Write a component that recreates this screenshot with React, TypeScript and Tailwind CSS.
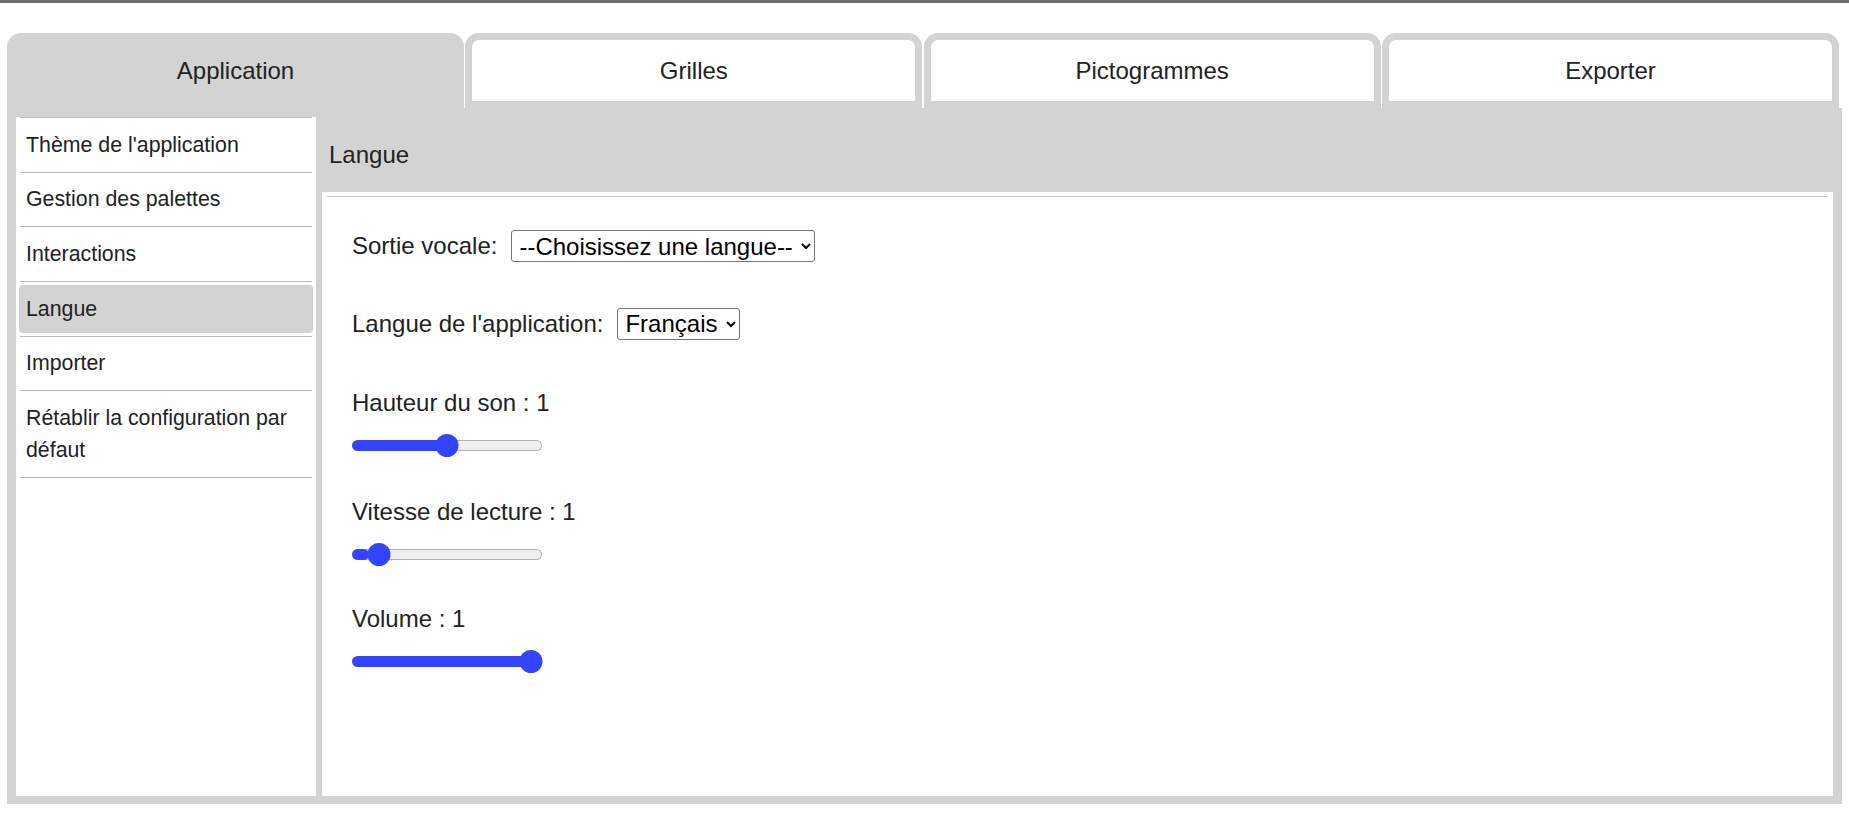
import * as Slider from "@radix-ui/react-slider";

const tabs = ["Application", "Grilles", "Pictogrammes", "Exporter"];

const menuItems = [
    "Thème de l'application",
    "Gestion des palettes",
    "Interactions",
    "Langue",
    "Importer",
    "Rétablir la configuration par défaut",
];

interface RangeProps {
    label: string;
    min: number;
    max: number;
    step: number;
    value: number;
    className: string;
}

function RangeField({ label, min, max, step, value, className }: RangeProps) {
    return (
        <div className={className}>
            <p className="leading-[28px]">{label} : {value}</p>
            <Slider.Root
                className="relative flex items-center w-[190px] h-[23px] mt-[16.5px] select-none touch-none"
                defaultValue={[value]}
                min={min}
                max={max}
                step={step}
            >
                <Slider.Track className="relative grow h-[11px] rounded-full bg-[#efefef] shadow-[inset_0_0_0_1px_#b2b2b2] overflow-hidden">
                    <Slider.Range className="absolute h-full rounded-full bg-[#3344ff]" />
                </Slider.Track>
                <Slider.Thumb className="block w-[23px] h-[23px] rounded-full bg-[#3344ff] outline-none" aria-label={label} />
            </Slider.Root>
        </div>
    );
}

export default function App() {
    const active = "Langue";

    return (
        <div className="min-h-screen bg-white text-[#222] font-['Liberation_Sans',Arial,sans-serif]">
            <div className="h-[3px] bg-[#6b6b6b]" />

            <div className="mx-[7px] mt-[30px]">
                {/* onglets */}
                <div className="flex gap-[1.33px] pr-[3px]">
                    {tabs.map((tab, i) => (
                        <div
                            key={tab}
                            className={`flex-1 h-[75px] flex items-center justify-center border-[7px] border-[#d3d3d3] rounded-t-[14px] text-[24px] ${i === 0 ? "bg-[#d3d3d3]" : "bg-white"}`}
                        >
                            {tab}
                        </div>
                    ))}
                </div>

                {/* panneau */}
                <div className="bg-[#d3d3d3] pt-[9px] px-[9px] pb-[8px]">
                    <div className="flex gap-[6px] h-[679px]">
                        <div className="w-[300px] bg-white text-[21.33px]">
                            <div className="mx-1 border-t border-[#bdbdbd]">
                                {menuItems.map((item) => (
                                    <div key={item} className="border-b border-[#bdbdbd] py-[3px]">
                                        <div
                                            className={`px-[6px] py-[7.83px] leading-[32px] rounded-[4px] ${item === active ? "bg-[#d3d3d3] -mx-px px-[7px]" : ""}`}
                                        >
                                            {item}
                                        </div>
                                    </div>
                                ))}
                            </div>
                        </div>

                        <div className="flex-1 flex flex-col">
                            <div className="h-[75px] flex items-center pl-[7px] text-[24px]">Langue</div>
                            <div className="flex-1 bg-white text-[24px] pl-[30px] flex flex-col">
                                <div className="-ml-[25px] mr-[5px] mt-[4px] border-t border-[#c8c8c8]" />

                                <div className="mt-[33px] h-[32px] flex items-center gap-[14px]">
                                    <span>Sortie vocale:</span>
                                    <select
                                        defaultValue=""
                                        className="h-[32px] border border-[#767676] rounded-[3px] bg-white pl-[3px] pr-[5px] text-black"
                                    >
                                        <option value="">--Choisissez une langue--</option>
                                    </select>
                                </div>

                                <div className="mt-[45.5px] h-[32px] flex items-center gap-[14px]">
                                    <span>Langue de l'application:</span>
                                    <select
                                        defaultValue="fr"
                                        className="h-[32px] border border-[#767676] rounded-[3px] bg-white pl-[3px] pr-[5px] text-black"
                                    >
                                        <option value="fr">Français</option>
                                        <option value="en">English</option>
                                    </select>
                                </div>

                                <RangeField className="mt-[49.5px]" label="Hauteur du son" min={0} max={2} step={0.1} value={1} />
                                <RangeField className="mt-[41.5px]" label="Vitesse de lecture" min={0.1} max={10} step={0.1} value={1} />
                                <RangeField className="mt-[39.5px]" label="Volume" min={0} max={1} step={0.1} value={1} />
                            </div>
                        </div>
                    </div>
                </div>
            </div>
        </div>
    );
}
